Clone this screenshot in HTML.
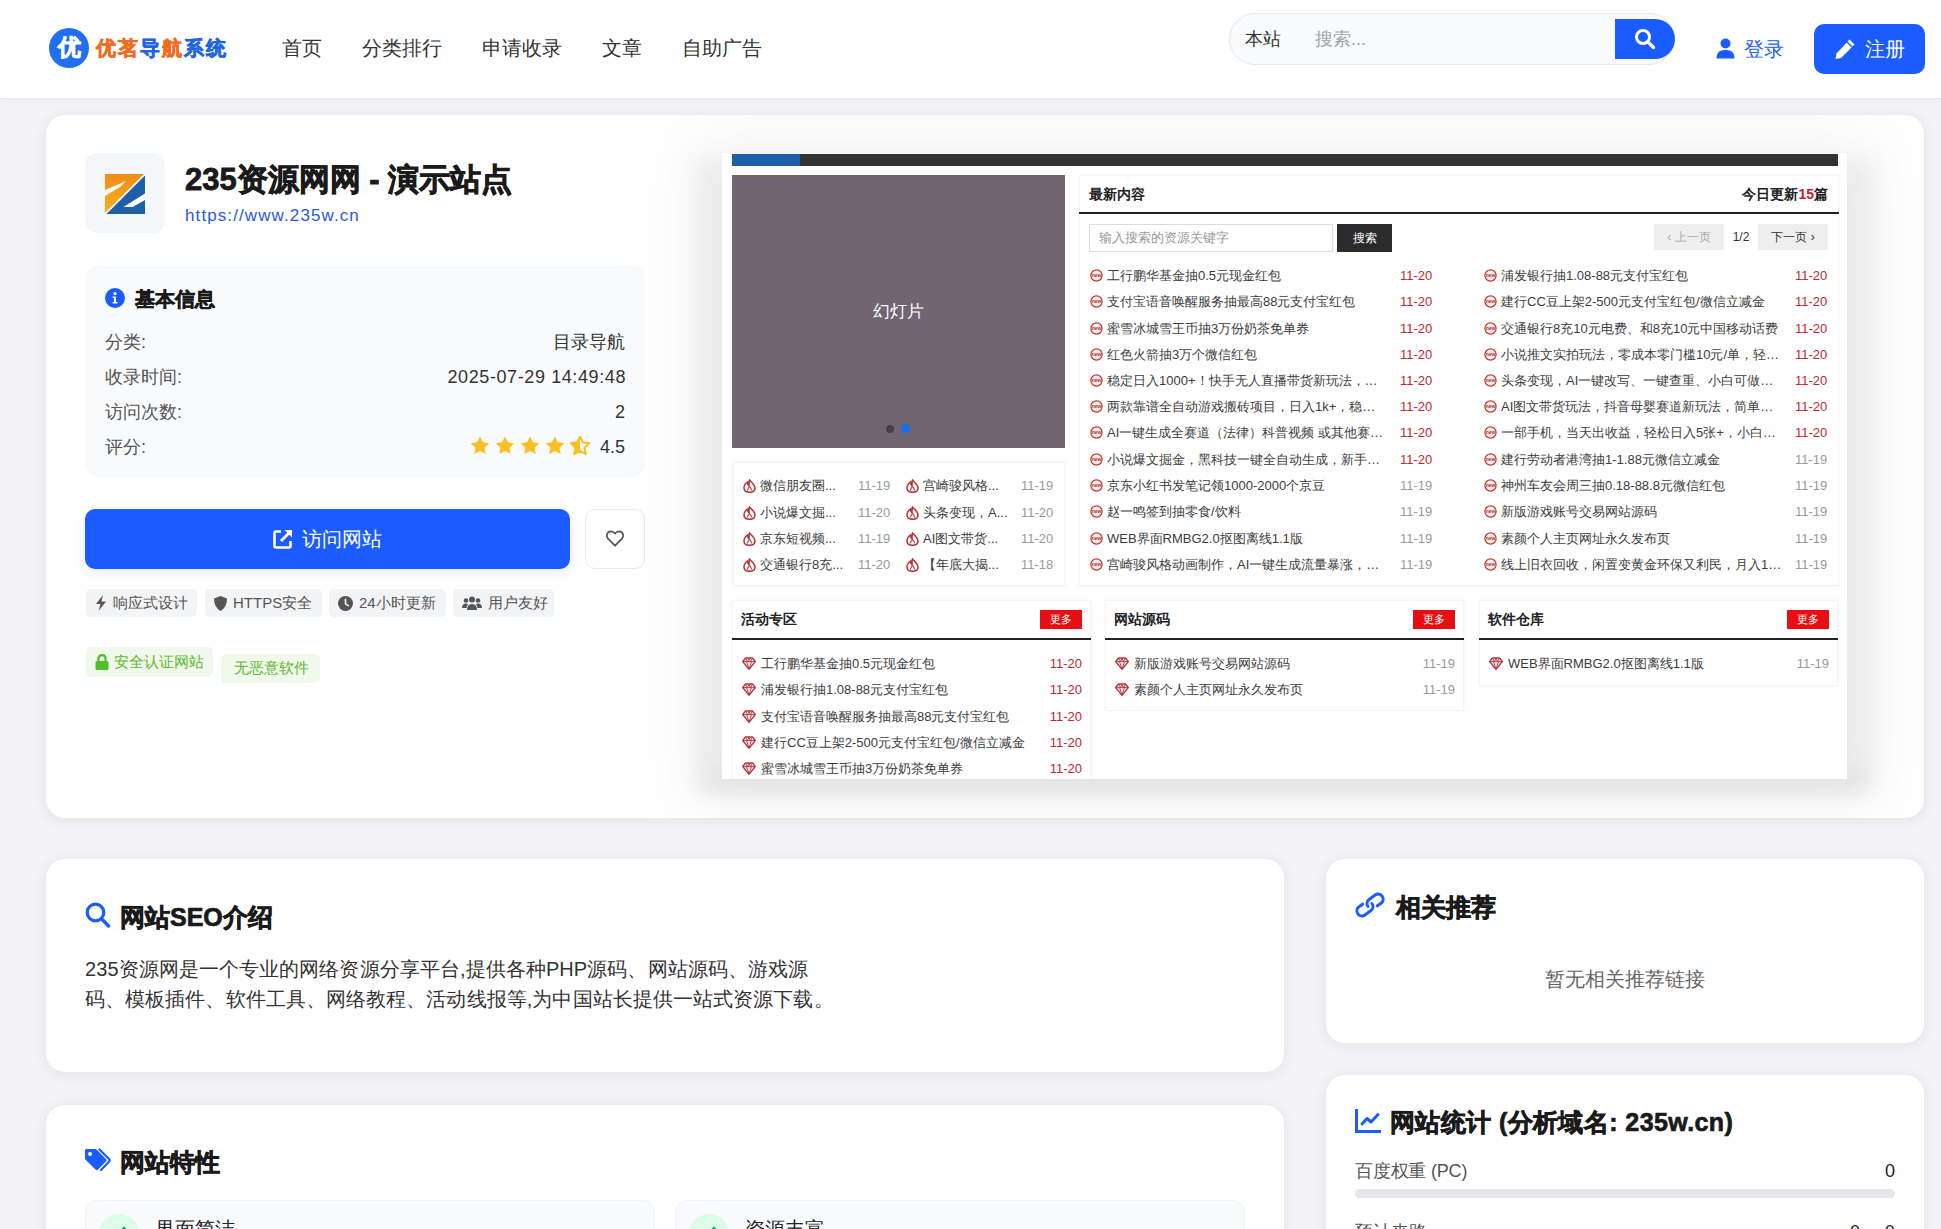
<!DOCTYPE html>
<html><head><meta charset="utf-8">
<style>
*{box-sizing:border-box;margin:0;padding:0}
html,body{width:1941px;height:1229px;overflow:hidden}
body{background:#f3f3f8;font-family:"Liberation Sans",sans-serif;color:#333;position:relative}
.abs{position:absolute}
.hdr{position:absolute;left:0;top:0;width:1941px;height:99px;background:#fff;border-bottom:1px solid #e9eaef;box-shadow:0 2px 6px rgba(0,0,0,.03)}
.logo-c{left:49px;top:28px;width:40px;height:40px;border-radius:50%;background:#1f6ff0;color:#fff;font-family:"Liberation Serif",serif;font-weight:900;font-size:23px;line-height:40px;text-align:center;-webkit-text-stroke:.8px #fff}
.logo-t{left:96px;top:33px;font-family:"Liberation Serif",serif;font-weight:900;font-size:20px;line-height:30px;letter-spacing:2px}
.nav{top:34px;font-size:20px;line-height:28px;color:#333}
.sbox{left:1229px;top:13px;width:446px;height:52px;border-radius:26px;background:#f9fafb;border:1px solid #e8e9ec}
.sbtn{left:1615px;top:19px;width:60px;height:40px;background:#1a5cff;border-radius:0 20px 20px 0}
.card{position:absolute;background:#fff;border-radius:20px;box-shadow:0 2px 14px rgba(30,30,80,.07);border:1px solid #ebecf2}
.blue{color:#1a5cff}
.lbl{left:105px;font-size:18px;line-height:26px;color:#555}
.val{right:1316px;font-size:18px;line-height:26px;color:#333;text-align:right;white-space:nowrap}
.tag{top:589px;height:28px;border-radius:5px;background:#f3f4f6;font-size:15px;color:#555;display:flex;align-items:center;padding-left:9px;white-space:nowrap}
.gtag{border-radius:5px;background:#f0f9eb;font-size:15px;color:#5cb82f;display:flex;align-items:center;white-space:nowrap}
.pbox{background:#fff;border:1px solid #f5f5f5;box-shadow:0 0 4px rgba(0,0,0,.035)}
.pl{height:26px;font-size:13px;line-height:26px;color:#3c3c3c;white-space:nowrap}
.el{position:absolute;top:0;overflow:hidden;text-overflow:ellipsis;white-space:nowrap}
.htitle{font-size:25px;line-height:36px;font-weight:bold;color:#1a1a1a;white-space:nowrap;-webkit-text-stroke:.7px #1a1a1a}
</style></head><body>
<div class="hdr"></div>
<div class="abs logo-c">优</div>
<div class="abs logo-t"><span style="color:#f26b1d;-webkit-text-stroke:.6px #f26b1d">优茗</span><span style="color:#1f66e0;-webkit-text-stroke:.6px #1f66e0">导</span><span style="color:#f26b1d;-webkit-text-stroke:.6px #f26b1d">航</span><span style="color:#1f66e0;-webkit-text-stroke:.6px #1f66e0">系统</span></div>
<div class="abs nav" style="left:282px">首页</div>
<div class="abs nav" style="left:362px">分类排行</div>
<div class="abs nav" style="left:482px">申请收录</div>
<div class="abs nav" style="left:602px">文章</div>
<div class="abs nav" style="left:682px">自助广告</div>
<div class="abs sbox"></div>
<div class="abs" style="left:1245px;top:26px;font-size:18px;line-height:26px;color:#333">本站</div>
<div class="abs" style="left:1315px;top:26px;font-size:18px;line-height:26px;color:#a0a3a8">搜索...</div>
<div class="abs sbtn"></div>
<svg class="abs" style="left:1634px;top:28px" width="22" height="22" viewBox="0 0 22 22"><circle cx="9" cy="9" r="6.5" fill="none" stroke="#fff" stroke-width="3"/><path d="M13.5 13.5 L19.5 19.5" stroke="#fff" stroke-width="3.2" stroke-linecap="round"/></svg>
<svg class="abs" style="left:1716px;top:38px" width="19" height="21" viewBox="0 0 19 21"><circle cx="9.5" cy="5.5" r="5" fill="#1a5cff"/><path d="M0.5 20.5 C0.5 14 4 12 9.5 12 C15 12 18.5 14 18.5 20.5 Z" fill="#1a5cff"/></svg>
<div class="abs blue" style="left:1744px;top:35px;font-size:20px;line-height:28px">登录</div>
<div class="abs" style="left:1814px;top:24px;width:111px;height:50px;background:#1a5cff;border-radius:10px"></div>
<svg class="abs" style="left:1834px;top:38px" width="22" height="22" viewBox="0 0 22 22"><path d="M15.5 1.5 L20.5 6.5 L7 20 L1.5 21 L2.5 15.5 Z" fill="#fff"/><path d="M13 4 L18 9" stroke="#1a5cff" stroke-width="1.4"/></svg>
<div class="abs" style="left:1865px;top:35px;font-size:20px;line-height:28px;color:#fff">注册</div>

<!-- main card -->
<div class="card" style="left:45px;top:114px;width:1880px;height:705px"></div>


<!-- site icon -->
<div class="abs" style="left:85px;top:153px;width:80px;height:80px;border-radius:12px;background:#f5f6f9"></div>
<svg class="abs" style="left:105px;top:174px" width="40" height="40" viewBox="0 0 40 40">
<defs><linearGradient id="og" x1="0" y1="0" x2="0" y2="1"><stop offset="0" stop-color="#f08c1a"/><stop offset="1" stop-color="#f7b21c"/></linearGradient></defs>
<polygon points="0,0 39,0 0,39" fill="url(#og)"/>
<polygon points="40,1.5 40,40 1.5,40" fill="#1f5fa8"/>
<polygon points="0,16 21,7 15,13 0,22" fill="#fff"/>
<polygon points="18.5,33 40,19.5 40,26 27.5,33" fill="#fff"/>
</svg>
<div class="abs" style="left:185px;top:160px;font-size:31px;line-height:40px;font-weight:bold;color:#1a1a1a;white-space:nowrap;-webkit-text-stroke:.8px #1a1a1a">235资源网网 - 演示站点</div>
<div class="abs" style="left:185px;top:205px;font-size:17px;line-height:22px;color:#2c5ad8;white-space:nowrap;letter-spacing:1.1px">https://www.235w.cn</div>

<!-- info box -->
<div class="abs" style="left:85px;top:265px;width:560px;height:212px;border-radius:14px;background:#f9fafb"></div>
<svg class="abs" style="left:105px;top:288px" width="20" height="20" viewBox="0 0 20 20"><circle cx="10" cy="10" r="10" fill="#1a5cff"/><circle cx="10" cy="5.6" r="1.6" fill="#fff"/><path d="M7.6 8.6 H11 V14 H12.4 V15.4 H7.6 V14 H9 V10 H7.6 Z" fill="#fff"/></svg>
<div class="abs" style="left:135px;top:285px;font-size:20px;line-height:28px;font-weight:bold;color:#1a1a1a;-webkit-text-stroke:.6px #1a1a1a">基本信息</div>
<div class="abs lbl" style="top:329px">分类:</div><div class="abs val" style="top:329px">目录导航</div>
<div class="abs lbl" style="top:364px">收录时间:</div><div class="abs val" style="top:364px;letter-spacing:.6px;right:1315px">2025-07-29 14:49:48</div>
<div class="abs lbl" style="top:399px">访问次数:</div><div class="abs val" style="top:399px">2</div>
<div class="abs lbl" style="top:434px">评分:</div><div class="abs val" style="top:434px">4.5</div>
<div class="abs" style="left:470px;top:436px;white-space:nowrap;line-height:0">
<svg width="20" height="20" viewBox="1 1 22 22" style="margin-right:5px"><path d="M12 1.5 L15.1 8 L22.2 8.9 L17 13.8 L18.3 20.8 L12 17.4 L5.7 20.8 L7 13.8 L1.8 8.9 L8.9 8 Z" fill="#fbbf24"/></svg><svg width="20" height="20" viewBox="1 1 22 22" style="margin-right:5px"><path d="M12 1.5 L15.1 8 L22.2 8.9 L17 13.8 L18.3 20.8 L12 17.4 L5.7 20.8 L7 13.8 L1.8 8.9 L8.9 8 Z" fill="#fbbf24"/></svg><svg width="20" height="20" viewBox="1 1 22 22" style="margin-right:5px"><path d="M12 1.5 L15.1 8 L22.2 8.9 L17 13.8 L18.3 20.8 L12 17.4 L5.7 20.8 L7 13.8 L1.8 8.9 L8.9 8 Z" fill="#fbbf24"/></svg><svg width="20" height="20" viewBox="1 1 22 22" style="margin-right:5px"><path d="M12 1.5 L15.1 8 L22.2 8.9 L17 13.8 L18.3 20.8 L12 17.4 L5.7 20.8 L7 13.8 L1.8 8.9 L8.9 8 Z" fill="#fbbf24"/></svg><svg width="20" height="20" viewBox="1 1 22 22"><path d="M12 1.5 L15.1 8 L22.2 8.9 L17 13.8 L18.3 20.8 L12 17.4 L5.7 20.8 L7 13.8 L1.8 8.9 L8.9 8 Z" fill="none" stroke="#fbbf24" stroke-width="2.2" stroke-linejoin="round"/><path d="M12 1.5 L12 17.4 L5.7 20.8 L7 13.8 L1.8 8.9 L8.9 8 Z" fill="#fbbf24"/></svg>
</div>

<!-- visit button -->
<div class="abs" style="left:85px;top:509px;width:485px;height:60px;border-radius:10px;background:#1a5cff;box-shadow:0 4px 12px rgba(26,92,255,.12)"></div>
<svg class="abs" style="left:272px;top:528px" width="22" height="22" viewBox="0 0 22 22"><path d="M9 3.5 H4 Q2.5 3.5 2.5 5 V18 Q2.5 19.5 4 19.5 H17 Q18.5 19.5 18.5 18 V13" fill="none" stroke="#fff" stroke-width="2.6"/><path d="M12.5 2 H20 V9.5 Z" fill="#fff"/><path d="M9 13 L17 5" stroke="#fff" stroke-width="2.8"/></svg>
<div class="abs" style="left:302px;top:525px;font-size:20px;line-height:28px;color:#fff">访问网站</div>
<div class="abs" style="left:585px;top:509px;width:60px;height:60px;border-radius:10px;background:#fff;border:1px solid #e8e9ec"></div>
<svg class="abs" style="left:605px;top:530px" width="20" height="17" viewBox="0 0 22 20"><path d="M11 18.5 L3 10.5 Q0.8 8.2 1.5 5.2 Q2.5 1.8 6 1.6 Q8.8 1.5 11 4.2 Q13.2 1.5 16 1.6 Q19.5 1.8 20.5 5.2 Q21.2 8.2 19 10.5 Z" fill="none" stroke="#555" stroke-width="2"/></svg>

<!-- tags -->
<div class="abs tag" style="left:86px;width:111px"><svg width="12" height="16" viewBox="0 0 12 16" style="margin-right:6px"><path d="M8 0 L1 9 H5.5 L3.5 16 L11 6.5 H6.5 Z" fill="#555"/></svg>响应式设计</div>
<div class="abs tag" style="left:205px;width:117px"><svg width="13" height="15" viewBox="0 0 13 15" style="margin-right:6px"><path d="M6.5 0 L13 2.4 Q13 11 6.5 15 Q0 11 0 2.4 Z" fill="#555"/></svg>HTTPS安全</div>
<div class="abs tag" style="left:329px;width:117px"><svg width="15" height="15" viewBox="0 0 15 15" style="margin-right:6px"><circle cx="7.5" cy="7.5" r="7.5" fill="#555"/><path d="M7.5 3.2 V7.8 L10.3 9.6" stroke="#fff" stroke-width="1.6" fill="none" stroke-linecap="round"/></svg>24小时更新</div>
<div class="abs tag" style="left:453px;width:101px"><svg width="20" height="15" viewBox="0 0 20 15" style="margin-right:6px"><circle cx="10" cy="3.5" r="3" fill="#555"/><circle cx="4" cy="4.5" r="2.3" fill="#555"/><circle cx="16" cy="4.5" r="2.3" fill="#555"/><path d="M5 14 Q5 8 10 8 Q15 8 15 14 Z" fill="#555"/><path d="M0 12 Q0 7.5 4 7.5 Q5.5 7.5 6 8.5 Q4.5 10 4.5 12 Z" fill="#555"/><path d="M20 12 Q20 7.5 16 7.5 Q14.5 7.5 14 8.5 Q15.5 10 15.5 12 Z" fill="#555"/></svg>用户友好</div>

<div class="abs gtag" style="left:86px;top:647px;width:127px;height:30px;padding-left:9px"><svg width="14" height="16" viewBox="0 0 14 16" style="margin-right:5px"><path d="M3.5 7 V4.5 Q3.5 1.2 7 1.2 Q10.5 1.2 10.5 4.5 V7" fill="none" stroke="#4cc02c" stroke-width="2.2"/><rect x="0.5" y="7" width="13" height="9" rx="1.5" fill="#4cc02c"/></svg>安全认证网站</div>
<div class="abs gtag" style="left:221px;top:654px;width:99px;height:29px;justify-content:center;padding-left:2px">无恶意软件</div>


<!-- SEO card -->
<div class="card" style="left:45px;top:858px;width:1240px;height:215px"></div>
<svg class="abs" style="left:85px;top:902px" width="26" height="27" viewBox="0 0 26 27"><circle cx="10.5" cy="10.5" r="8.3" fill="none" stroke="#1a5cff" stroke-width="3.2"/><path d="M16.5 16.8 L23.5 24" stroke="#1a5cff" stroke-width="3.4" stroke-linecap="round"/></svg>
<div class="abs htitle" style="left:120px;top:899px">网站SEO介绍</div>
<div class="abs" style="left:85px;top:954px;font-size:20px;line-height:30px;color:#333;white-space:nowrap;letter-spacing:.08px">235资源网是一个专业的网络资源分享平台,提供各种PHP源码、网站源码、游戏源<br>码、模板插件、软件工具、网络教程、活动线报等,为中国站长提供一站式资源下载。</div>

<!-- features card -->
<div class="card" style="left:45px;top:1104px;width:1240px;height:200px"></div>
<svg class="abs" style="left:84px;top:1148px" width="28" height="25" viewBox="0 0 28 25"><path d="M1 2.5 Q1 1 2.5 1 H11 Q12 1 12.8 1.8 L22 11 Q23.2 12.3 22 13.5 L14 21.5 Q12.7 22.8 11.5 21.5 L1.8 12 Q1 11.2 1 10 Z" fill="#1a5cff"/><circle cx="6" cy="6" r="2" fill="#fff"/><path d="M15.5 1.5 L25 11 Q26.5 12.3 25 13.7 L17 22" fill="none" stroke="#1a5cff" stroke-width="2.2" stroke-linecap="round"/></svg>
<div class="abs htitle" style="left:120px;top:1144px">网站特性</div>
<div class="abs" style="left:85px;top:1200px;width:570px;height:80px;border-radius:12px;background:#f9fafb;border:1px solid #f2f3f5"></div>
<div class="abs" style="left:675px;top:1200px;width:570px;height:80px;border-radius:12px;background:#f9fafb;border:1px solid #f2f3f5"></div>
<div class="abs" style="left:99px;top:1214px;width:40px;height:40px;border-radius:50%;background:#dcfce7"></div>
<div class="abs" style="left:689px;top:1214px;width:40px;height:40px;border-radius:50%;background:#dcfce7"></div>
<div class="abs" style="left:113px;top:1226px;width:12px;height:8px;border-left:3px solid #16a34a;border-bottom:3px solid #16a34a;transform:rotate(-45deg)"></div>
<div class="abs" style="left:703px;top:1226px;width:12px;height:8px;border-left:3px solid #16a34a;border-bottom:3px solid #16a34a;transform:rotate(-45deg)"></div>
<div class="abs" style="left:155px;top:1215px;font-size:20px;line-height:28px;color:#222">界面简洁</div>
<div class="abs" style="left:745px;top:1215px;font-size:20px;line-height:28px;color:#222">资源丰富</div>

<!-- related card -->
<div class="card" style="left:1325px;top:858px;width:600px;height:186px"></div>
<svg class="abs" style="left:1353px;top:890px" width="34" height="30" viewBox="0 0 34 30"><g transform="rotate(-36 17 15)" fill="none" stroke="#1a5cff" stroke-width="3" stroke-linecap="round"><path d="M19.5 15 A5 5 0 0 1 14.5 20 H7 A5 5 0 0 1 7 10 H11.5"/><path d="M14.5 15 A5 5 0 0 1 19.5 10 H27 A5 5 0 0 1 27 20 H22.5"/></g></svg>
<div class="abs htitle" style="left:1396px;top:889px">相关推荐</div>
<div class="abs" style="left:1325px;width:600px;top:965px;text-align:center;font-size:20px;line-height:28px;color:#666">暂无相关推荐链接</div>

<!-- stats card -->
<div class="card" style="left:1325px;top:1074px;width:600px;height:200px"></div>
<svg class="abs" style="left:1355px;top:1109px" width="26" height="24" viewBox="0 0 26 24"><path d="M1.5 1 V22.5 H25" fill="none" stroke="#1a5cff" stroke-width="3" stroke-linecap="round"/><path d="M7 15 L12 9.5 L16 13 L23 5.5" fill="none" stroke="#1a5cff" stroke-width="3" stroke-linecap="round" stroke-linejoin="round"/></svg>
<div class="abs htitle" style="left:1390px;top:1104px;letter-spacing:.4px">网站统计 (分析域名: 235w.cn)</div>
<div class="abs" style="left:1355px;top:1158px;font-size:18px;line-height:26px;color:#555;letter-spacing:-.2px">百度权重 (PC)</div>
<div class="abs" style="left:1795px;width:100px;text-align:right;top:1158px;font-size:18px;line-height:26px;color:#222">0</div>
<div class="abs" style="left:1355px;top:1189px;width:540px;height:9px;border-radius:5px;background:#e5e7eb"></div>
<div class="abs" style="left:1355px;top:1219px;font-size:18px;line-height:26px;color:#555">预计来路</div>
<div class="abs" style="left:1797px;width:100px;text-align:right;top:1219px;font-size:18px;line-height:26px;color:#222;letter-spacing:2.2px">0 - 0</div>

<!--PREVIEW-->
<div class="abs" style="left:45px;top:114px;width:1880px;height:705px;overflow:hidden;border-radius:20px">
<div class="abs" style="left:650px;top:44px;width:1180px;height:630px;background:#f2f2f2;filter:blur(12px)"></div>
<div class="abs" style="left:660px;top:652px;width:1160px;height:26px;background:#eaeaea;filter:blur(9px)"></div>
<div class="abs" style="left:677px;top:39px;width:1125px;height:626px;background:#fff;overflow:hidden;box-shadow:0 8px 80px 40px rgba(0,0,0,.035)">
<div style="position:absolute;left:-722px;top:-153px;width:1941px;height:1229px">
<div class="abs" style="left:732px;top:154px;width:1106px;height:12px;background:#333"></div>
<div class="abs" style="left:732px;top:154px;width:68px;height:12px;background:#1e5ea6"></div>
<div class="abs" style="left:732px;top:175px;width:333px;height:273px;background:#706571"></div>
<div class="abs" style="left:732px;top:300px;width:333px;text-align:center;font-size:17px;line-height:24px;color:#fff">幻灯片</div>
<div class="abs" style="left:886px;top:425px;width:8px;height:8px;border-radius:50%;background:#4a4049"></div>
<div class="abs" style="left:901px;top:424px;width:9px;height:9px;border-radius:50%;background:#1b6df0"></div>
<div class="abs pbox" style="left:733px;top:462px;width:332px;height:124px"></div>
<div class="abs pl" style="left:743px;top:473px;width:150px"><svg width="13" height="14" viewBox="0 0 13 14" style="position:absolute;left:0;top:6px"><path d="M6.5 1 C9 3.5 12 6 12 9 C12 12 9.5 13.3 6.5 13.3 C3.5 13.3 1 12 1 9 C1 6.5 3 4 4.5 3 C4.5 5 5 6 6 6.5 C6 4.5 6 2.5 6.5 1 Z" fill="none" stroke="#b8323a" stroke-width="1.5"/><path d="M4 11.5 L6.5 7 L9 11.5" fill="none" stroke="#c84a50" stroke-width="1.3"/></svg><span style="position:absolute;left:17px;top:0">微信朋友圈...</span><span style="position:absolute;left:115px;top:0;color:#999">11-19</span></div>
<div class="abs pl" style="left:906px;top:473px;width:150px"><svg width="13" height="14" viewBox="0 0 13 14" style="position:absolute;left:0;top:6px"><path d="M6.5 1 C9 3.5 12 6 12 9 C12 12 9.5 13.3 6.5 13.3 C3.5 13.3 1 12 1 9 C1 6.5 3 4 4.5 3 C4.5 5 5 6 6 6.5 C6 4.5 6 2.5 6.5 1 Z" fill="none" stroke="#b8323a" stroke-width="1.5"/><path d="M4 11.5 L6.5 7 L9 11.5" fill="none" stroke="#c84a50" stroke-width="1.3"/></svg><span style="position:absolute;left:17px;top:0">宫崎骏风格...</span><span style="position:absolute;left:115px;top:0;color:#999">11-19</span></div>
<div class="abs pl" style="left:743px;top:500px;width:150px"><svg width="13" height="14" viewBox="0 0 13 14" style="position:absolute;left:0;top:6px"><path d="M6.5 1 C9 3.5 12 6 12 9 C12 12 9.5 13.3 6.5 13.3 C3.5 13.3 1 12 1 9 C1 6.5 3 4 4.5 3 C4.5 5 5 6 6 6.5 C6 4.5 6 2.5 6.5 1 Z" fill="none" stroke="#b8323a" stroke-width="1.5"/><path d="M4 11.5 L6.5 7 L9 11.5" fill="none" stroke="#c84a50" stroke-width="1.3"/></svg><span style="position:absolute;left:17px;top:0">小说爆文掘...</span><span style="position:absolute;left:115px;top:0;color:#999">11-20</span></div>
<div class="abs pl" style="left:906px;top:500px;width:150px"><svg width="13" height="14" viewBox="0 0 13 14" style="position:absolute;left:0;top:6px"><path d="M6.5 1 C9 3.5 12 6 12 9 C12 12 9.5 13.3 6.5 13.3 C3.5 13.3 1 12 1 9 C1 6.5 3 4 4.5 3 C4.5 5 5 6 6 6.5 C6 4.5 6 2.5 6.5 1 Z" fill="none" stroke="#b8323a" stroke-width="1.5"/><path d="M4 11.5 L6.5 7 L9 11.5" fill="none" stroke="#c84a50" stroke-width="1.3"/></svg><span style="position:absolute;left:17px;top:0">头条变现，A...</span><span style="position:absolute;left:115px;top:0;color:#999">11-20</span></div>
<div class="abs pl" style="left:743px;top:526px;width:150px"><svg width="13" height="14" viewBox="0 0 13 14" style="position:absolute;left:0;top:6px"><path d="M6.5 1 C9 3.5 12 6 12 9 C12 12 9.5 13.3 6.5 13.3 C3.5 13.3 1 12 1 9 C1 6.5 3 4 4.5 3 C4.5 5 5 6 6 6.5 C6 4.5 6 2.5 6.5 1 Z" fill="none" stroke="#b8323a" stroke-width="1.5"/><path d="M4 11.5 L6.5 7 L9 11.5" fill="none" stroke="#c84a50" stroke-width="1.3"/></svg><span style="position:absolute;left:17px;top:0">京东短视频...</span><span style="position:absolute;left:115px;top:0;color:#999">11-19</span></div>
<div class="abs pl" style="left:906px;top:526px;width:150px"><svg width="13" height="14" viewBox="0 0 13 14" style="position:absolute;left:0;top:6px"><path d="M6.5 1 C9 3.5 12 6 12 9 C12 12 9.5 13.3 6.5 13.3 C3.5 13.3 1 12 1 9 C1 6.5 3 4 4.5 3 C4.5 5 5 6 6 6.5 C6 4.5 6 2.5 6.5 1 Z" fill="none" stroke="#b8323a" stroke-width="1.5"/><path d="M4 11.5 L6.5 7 L9 11.5" fill="none" stroke="#c84a50" stroke-width="1.3"/></svg><span style="position:absolute;left:17px;top:0">AI图文带货...</span><span style="position:absolute;left:115px;top:0;color:#999">11-20</span></div>
<div class="abs pl" style="left:743px;top:552px;width:150px"><svg width="13" height="14" viewBox="0 0 13 14" style="position:absolute;left:0;top:6px"><path d="M6.5 1 C9 3.5 12 6 12 9 C12 12 9.5 13.3 6.5 13.3 C3.5 13.3 1 12 1 9 C1 6.5 3 4 4.5 3 C4.5 5 5 6 6 6.5 C6 4.5 6 2.5 6.5 1 Z" fill="none" stroke="#b8323a" stroke-width="1.5"/><path d="M4 11.5 L6.5 7 L9 11.5" fill="none" stroke="#c84a50" stroke-width="1.3"/></svg><span style="position:absolute;left:17px;top:0">交通银行8充...</span><span style="position:absolute;left:115px;top:0;color:#999">11-20</span></div>
<div class="abs pl" style="left:906px;top:552px;width:150px"><svg width="13" height="14" viewBox="0 0 13 14" style="position:absolute;left:0;top:6px"><path d="M6.5 1 C9 3.5 12 6 12 9 C12 12 9.5 13.3 6.5 13.3 C3.5 13.3 1 12 1 9 C1 6.5 3 4 4.5 3 C4.5 5 5 6 6 6.5 C6 4.5 6 2.5 6.5 1 Z" fill="none" stroke="#b8323a" stroke-width="1.5"/><path d="M4 11.5 L6.5 7 L9 11.5" fill="none" stroke="#c84a50" stroke-width="1.3"/></svg><span style="position:absolute;left:17px;top:0">【年底大揭...</span><span style="position:absolute;left:115px;top:0;color:#999">11-18</span></div>
<div class="abs pbox" style="left:1079px;top:175px;width:760px;height:411px"></div>
<div class="abs" style="left:1089px;top:184px;font-size:14px;line-height:20px;font-weight:bold;color:#222">最新内容</div>
<div class="abs" style="left:1700px;width:128px;text-align:right;top:184px;font-size:14px;line-height:20px;font-weight:bold;color:#222">今日更新<span style="color:#c8202a">15</span>篇</div>
<div class="abs" style="left:1079px;top:212px;width:760px;height:2px;background:#222"></div>
<div class="abs" style="left:1089px;top:224px;width:244px;height:28px;border:1px solid #ddd;background:#fff;font-size:13px;line-height:26px;padding-left:9px;color:#999">输入搜索的资源关键字</div>
<div class="abs" style="left:1337px;top:224px;width:55px;height:28px;background:#2b2b2b;color:#fff;font-size:12px;line-height:28px;text-align:center">搜索</div>
<div class="abs" style="left:1654px;top:224px;width:70px;height:26px;background:#eee;color:#aaa;font-size:12px;line-height:26px;text-align:center">‹ 上一页</div>
<div class="abs" style="left:1731px;top:224px;width:20px;color:#333;font-size:12px;line-height:26px;text-align:center">1/2</div>
<div class="abs" style="left:1758px;top:224px;width:70px;height:26px;background:#eee;color:#333;font-size:12px;line-height:26px;text-align:center">下一页 ›</div>
<div class="abs pl" style="left:1090px;top:263px;width:344px"><svg width="13" height="13" viewBox="0 0 13 13" style="position:absolute;left:0;top:6px"><circle cx="6.5" cy="6.5" r="5.6" fill="#fdeeee" stroke="#c0392b" stroke-width="1.2"/><text x="6.5" y="8.3" font-size="5" text-anchor="middle" fill="#b03030" font-family="Liberation Sans" font-weight="bold">new</text></svg><span class="el" style="left:17px;width:281px">工行鹏华基金抽0.5元现金红包</span><span style="position:absolute;left:310px;top:0;color:#bb2a30">11-20</span></div>
<div class="abs pl" style="left:1090px;top:289px;width:344px"><svg width="13" height="13" viewBox="0 0 13 13" style="position:absolute;left:0;top:6px"><circle cx="6.5" cy="6.5" r="5.6" fill="#fdeeee" stroke="#c0392b" stroke-width="1.2"/><text x="6.5" y="8.3" font-size="5" text-anchor="middle" fill="#b03030" font-family="Liberation Sans" font-weight="bold">new</text></svg><span class="el" style="left:17px;width:281px">支付宝语音唤醒服务抽最高88元支付宝红包</span><span style="position:absolute;left:310px;top:0;color:#bb2a30">11-20</span></div>
<div class="abs pl" style="left:1090px;top:316px;width:344px"><svg width="13" height="13" viewBox="0 0 13 13" style="position:absolute;left:0;top:6px"><circle cx="6.5" cy="6.5" r="5.6" fill="#fdeeee" stroke="#c0392b" stroke-width="1.2"/><text x="6.5" y="8.3" font-size="5" text-anchor="middle" fill="#b03030" font-family="Liberation Sans" font-weight="bold">new</text></svg><span class="el" style="left:17px;width:281px">蜜雪冰城雪王币抽3万份奶茶免单券</span><span style="position:absolute;left:310px;top:0;color:#bb2a30">11-20</span></div>
<div class="abs pl" style="left:1090px;top:342px;width:344px"><svg width="13" height="13" viewBox="0 0 13 13" style="position:absolute;left:0;top:6px"><circle cx="6.5" cy="6.5" r="5.6" fill="#fdeeee" stroke="#c0392b" stroke-width="1.2"/><text x="6.5" y="8.3" font-size="5" text-anchor="middle" fill="#b03030" font-family="Liberation Sans" font-weight="bold">new</text></svg><span class="el" style="left:17px;width:281px">红色火箭抽3万个微信红包</span><span style="position:absolute;left:310px;top:0;color:#bb2a30">11-20</span></div>
<div class="abs pl" style="left:1090px;top:368px;width:344px"><svg width="13" height="13" viewBox="0 0 13 13" style="position:absolute;left:0;top:6px"><circle cx="6.5" cy="6.5" r="5.6" fill="#fdeeee" stroke="#c0392b" stroke-width="1.2"/><text x="6.5" y="8.3" font-size="5" text-anchor="middle" fill="#b03030" font-family="Liberation Sans" font-weight="bold">new</text></svg><span class="el" style="left:17px;width:281px">稳定日入1000+！快手无人直播带货新玩法，日入过千</span><span style="position:absolute;left:310px;top:0;color:#bb2a30">11-20</span></div>
<div class="abs pl" style="left:1090px;top:394px;width:344px"><svg width="13" height="13" viewBox="0 0 13 13" style="position:absolute;left:0;top:6px"><circle cx="6.5" cy="6.5" r="5.6" fill="#fdeeee" stroke="#c0392b" stroke-width="1.2"/><text x="6.5" y="8.3" font-size="5" text-anchor="middle" fill="#b03030" font-family="Liberation Sans" font-weight="bold">new</text></svg><span class="el" style="left:17px;width:281px">两款靠谱全自动游戏搬砖项目，日入1k+，稳定收益</span><span style="position:absolute;left:310px;top:0;color:#bb2a30">11-20</span></div>
<div class="abs pl" style="left:1090px;top:420px;width:344px"><svg width="13" height="13" viewBox="0 0 13 13" style="position:absolute;left:0;top:6px"><circle cx="6.5" cy="6.5" r="5.6" fill="#fdeeee" stroke="#c0392b" stroke-width="1.2"/><text x="6.5" y="8.3" font-size="5" text-anchor="middle" fill="#b03030" font-family="Liberation Sans" font-weight="bold">new</text></svg><span class="el" style="left:17px;width:281px">AI一键生成全赛道（法律）科普视频 或其他赛道视频</span><span style="position:absolute;left:310px;top:0;color:#bb2a30">11-20</span></div>
<div class="abs pl" style="left:1090px;top:447px;width:344px"><svg width="13" height="13" viewBox="0 0 13 13" style="position:absolute;left:0;top:6px"><circle cx="6.5" cy="6.5" r="5.6" fill="#fdeeee" stroke="#c0392b" stroke-width="1.2"/><text x="6.5" y="8.3" font-size="5" text-anchor="middle" fill="#b03030" font-family="Liberation Sans" font-weight="bold">new</text></svg><span class="el" style="left:17px;width:281px">小说爆文掘金，黑科技一键全自动生成，新手也能做</span><span style="position:absolute;left:310px;top:0;color:#bb2a30">11-20</span></div>
<div class="abs pl" style="left:1090px;top:473px;width:344px"><svg width="13" height="13" viewBox="0 0 13 13" style="position:absolute;left:0;top:6px"><circle cx="6.5" cy="6.5" r="5.6" fill="#fdeeee" stroke="#c0392b" stroke-width="1.2"/><text x="6.5" y="8.3" font-size="5" text-anchor="middle" fill="#b03030" font-family="Liberation Sans" font-weight="bold">new</text></svg><span class="el" style="left:17px;width:281px">京东小红书发笔记领1000-2000个京豆</span><span style="position:absolute;left:310px;top:0;color:#999">11-19</span></div>
<div class="abs pl" style="left:1090px;top:499px;width:344px"><svg width="13" height="13" viewBox="0 0 13 13" style="position:absolute;left:0;top:6px"><circle cx="6.5" cy="6.5" r="5.6" fill="#fdeeee" stroke="#c0392b" stroke-width="1.2"/><text x="6.5" y="8.3" font-size="5" text-anchor="middle" fill="#b03030" font-family="Liberation Sans" font-weight="bold">new</text></svg><span class="el" style="left:17px;width:281px">赵一鸣签到抽零食/饮料</span><span style="position:absolute;left:310px;top:0;color:#999">11-19</span></div>
<div class="abs pl" style="left:1090px;top:526px;width:344px"><svg width="13" height="13" viewBox="0 0 13 13" style="position:absolute;left:0;top:6px"><circle cx="6.5" cy="6.5" r="5.6" fill="#fdeeee" stroke="#c0392b" stroke-width="1.2"/><text x="6.5" y="8.3" font-size="5" text-anchor="middle" fill="#b03030" font-family="Liberation Sans" font-weight="bold">new</text></svg><span class="el" style="left:17px;width:281px">WEB界面RMBG2.0抠图离线1.1版</span><span style="position:absolute;left:310px;top:0;color:#999">11-19</span></div>
<div class="abs pl" style="left:1090px;top:552px;width:344px"><svg width="13" height="13" viewBox="0 0 13 13" style="position:absolute;left:0;top:6px"><circle cx="6.5" cy="6.5" r="5.6" fill="#fdeeee" stroke="#c0392b" stroke-width="1.2"/><text x="6.5" y="8.3" font-size="5" text-anchor="middle" fill="#b03030" font-family="Liberation Sans" font-weight="bold">new</text></svg><span class="el" style="left:17px;width:281px">宫崎骏风格动画制作，AI一键生成流量暴涨，变现</span><span style="position:absolute;left:310px;top:0;color:#999">11-19</span></div>
<div class="abs pl" style="left:1484px;top:263px;width:345px"><svg width="13" height="13" viewBox="0 0 13 13" style="position:absolute;left:0;top:6px"><circle cx="6.5" cy="6.5" r="5.6" fill="#fdeeee" stroke="#c0392b" stroke-width="1.2"/><text x="6.5" y="8.3" font-size="5" text-anchor="middle" fill="#b03030" font-family="Liberation Sans" font-weight="bold">new</text></svg><span class="el" style="left:17px;width:282px">浦发银行抽1.08-88元支付宝红包</span><span style="position:absolute;left:311px;top:0;color:#bb2a30">11-20</span></div>
<div class="abs pl" style="left:1484px;top:289px;width:345px"><svg width="13" height="13" viewBox="0 0 13 13" style="position:absolute;left:0;top:6px"><circle cx="6.5" cy="6.5" r="5.6" fill="#fdeeee" stroke="#c0392b" stroke-width="1.2"/><text x="6.5" y="8.3" font-size="5" text-anchor="middle" fill="#b03030" font-family="Liberation Sans" font-weight="bold">new</text></svg><span class="el" style="left:17px;width:282px">建行CC豆上架2-500元支付宝红包/微信立减金</span><span style="position:absolute;left:311px;top:0;color:#bb2a30">11-20</span></div>
<div class="abs pl" style="left:1484px;top:316px;width:345px"><svg width="13" height="13" viewBox="0 0 13 13" style="position:absolute;left:0;top:6px"><circle cx="6.5" cy="6.5" r="5.6" fill="#fdeeee" stroke="#c0392b" stroke-width="1.2"/><text x="6.5" y="8.3" font-size="5" text-anchor="middle" fill="#b03030" font-family="Liberation Sans" font-weight="bold">new</text></svg><span class="el" style="left:17px;width:282px">交通银行8充10元电费、和8充10元中国移动话费</span><span style="position:absolute;left:311px;top:0;color:#bb2a30">11-20</span></div>
<div class="abs pl" style="left:1484px;top:342px;width:345px"><svg width="13" height="13" viewBox="0 0 13 13" style="position:absolute;left:0;top:6px"><circle cx="6.5" cy="6.5" r="5.6" fill="#fdeeee" stroke="#c0392b" stroke-width="1.2"/><text x="6.5" y="8.3" font-size="5" text-anchor="middle" fill="#b03030" font-family="Liberation Sans" font-weight="bold">new</text></svg><span class="el" style="left:17px;width:282px">小说推文实拍玩法，零成本零门槛10元/单，轻松上手</span><span style="position:absolute;left:311px;top:0;color:#bb2a30">11-20</span></div>
<div class="abs pl" style="left:1484px;top:368px;width:345px"><svg width="13" height="13" viewBox="0 0 13 13" style="position:absolute;left:0;top:6px"><circle cx="6.5" cy="6.5" r="5.6" fill="#fdeeee" stroke="#c0392b" stroke-width="1.2"/><text x="6.5" y="8.3" font-size="5" text-anchor="middle" fill="#b03030" font-family="Liberation Sans" font-weight="bold">new</text></svg><span class="el" style="left:17px;width:282px">头条变现，AI一键改写、一键查重、小白可做，日</span><span style="position:absolute;left:311px;top:0;color:#bb2a30">11-20</span></div>
<div class="abs pl" style="left:1484px;top:394px;width:345px"><svg width="13" height="13" viewBox="0 0 13 13" style="position:absolute;left:0;top:6px"><circle cx="6.5" cy="6.5" r="5.6" fill="#fdeeee" stroke="#c0392b" stroke-width="1.2"/><text x="6.5" y="8.3" font-size="5" text-anchor="middle" fill="#b03030" font-family="Liberation Sans" font-weight="bold">new</text></svg><span class="el" style="left:17px;width:282px">AI图文带货玩法，抖音母婴赛道新玩法，简单易上手</span><span style="position:absolute;left:311px;top:0;color:#bb2a30">11-20</span></div>
<div class="abs pl" style="left:1484px;top:420px;width:345px"><svg width="13" height="13" viewBox="0 0 13 13" style="position:absolute;left:0;top:6px"><circle cx="6.5" cy="6.5" r="5.6" fill="#fdeeee" stroke="#c0392b" stroke-width="1.2"/><text x="6.5" y="8.3" font-size="5" text-anchor="middle" fill="#b03030" font-family="Liberation Sans" font-weight="bold">new</text></svg><span class="el" style="left:17px;width:282px">一部手机，当天出收益，轻松日入5张+，小白也能做</span><span style="position:absolute;left:311px;top:0;color:#bb2a30">11-20</span></div>
<div class="abs pl" style="left:1484px;top:447px;width:345px"><svg width="13" height="13" viewBox="0 0 13 13" style="position:absolute;left:0;top:6px"><circle cx="6.5" cy="6.5" r="5.6" fill="#fdeeee" stroke="#c0392b" stroke-width="1.2"/><text x="6.5" y="8.3" font-size="5" text-anchor="middle" fill="#b03030" font-family="Liberation Sans" font-weight="bold">new</text></svg><span class="el" style="left:17px;width:282px">建行劳动者港湾抽1-1.88元微信立减金</span><span style="position:absolute;left:311px;top:0;color:#999">11-19</span></div>
<div class="abs pl" style="left:1484px;top:473px;width:345px"><svg width="13" height="13" viewBox="0 0 13 13" style="position:absolute;left:0;top:6px"><circle cx="6.5" cy="6.5" r="5.6" fill="#fdeeee" stroke="#c0392b" stroke-width="1.2"/><text x="6.5" y="8.3" font-size="5" text-anchor="middle" fill="#b03030" font-family="Liberation Sans" font-weight="bold">new</text></svg><span class="el" style="left:17px;width:282px">神州车友会周三抽0.18-88.8元微信红包</span><span style="position:absolute;left:311px;top:0;color:#999">11-19</span></div>
<div class="abs pl" style="left:1484px;top:499px;width:345px"><svg width="13" height="13" viewBox="0 0 13 13" style="position:absolute;left:0;top:6px"><circle cx="6.5" cy="6.5" r="5.6" fill="#fdeeee" stroke="#c0392b" stroke-width="1.2"/><text x="6.5" y="8.3" font-size="5" text-anchor="middle" fill="#b03030" font-family="Liberation Sans" font-weight="bold">new</text></svg><span class="el" style="left:17px;width:282px">新版游戏账号交易网站源码</span><span style="position:absolute;left:311px;top:0;color:#999">11-19</span></div>
<div class="abs pl" style="left:1484px;top:526px;width:345px"><svg width="13" height="13" viewBox="0 0 13 13" style="position:absolute;left:0;top:6px"><circle cx="6.5" cy="6.5" r="5.6" fill="#fdeeee" stroke="#c0392b" stroke-width="1.2"/><text x="6.5" y="8.3" font-size="5" text-anchor="middle" fill="#b03030" font-family="Liberation Sans" font-weight="bold">new</text></svg><span class="el" style="left:17px;width:282px">素颜个人主页网址永久发布页</span><span style="position:absolute;left:311px;top:0;color:#999">11-19</span></div>
<div class="abs pl" style="left:1484px;top:552px;width:345px"><svg width="13" height="13" viewBox="0 0 13 13" style="position:absolute;left:0;top:6px"><circle cx="6.5" cy="6.5" r="5.6" fill="#fdeeee" stroke="#c0392b" stroke-width="1.2"/><text x="6.5" y="8.3" font-size="5" text-anchor="middle" fill="#b03030" font-family="Liberation Sans" font-weight="bold">new</text></svg><span class="el" style="left:17px;width:282px">线上旧衣回收，闲置变黄金环保又利民，月入1万+</span><span style="position:absolute;left:311px;top:0;color:#999">11-19</span></div>
<div class="abs pbox" style="left:732px;top:600px;width:359px;height:200px"></div>
<div class="abs" style="left:741px;top:609px;font-size:14px;line-height:20px;font-weight:bold;color:#222">活动专区</div>
<div class="abs" style="left:1040px;top:610px;width:42px;height:19px;background:#e50f14;color:#fff;font-size:11px;line-height:19px;text-align:center">更多</div>
<div class="abs" style="left:732px;top:638px;width:359px;height:2px;background:#222"></div>
<div class="abs pl" style="left:742px;top:651px;width:340px"><svg width="14" height="13" viewBox="0 0 14 13" style="position:absolute;left:0;top:6px"><path d="M3.5 1 H10.5 L13.3 4.5 L7 12.3 L0.7 4.5 Z" fill="#fff2f2" stroke="#b8323a" stroke-width="1.3" stroke-linejoin="round"/><path d="M0.9 4.6 H13.1 M4.5 4.6 L7 12 L9.5 4.6 M3.6 1.2 L5.5 4.6 L7 1.5 L8.5 4.6 L10.4 1.2" fill="none" stroke="#b8323a" stroke-width=".9"/></svg><span style="position:absolute;left:19px;top:0">工行鹏华基金抽0.5元现金红包</span><span style="position:absolute;right:0;top:0;color:#bb2a30">11-20</span></div>
<div class="abs pl" style="left:742px;top:677px;width:340px"><svg width="14" height="13" viewBox="0 0 14 13" style="position:absolute;left:0;top:6px"><path d="M3.5 1 H10.5 L13.3 4.5 L7 12.3 L0.7 4.5 Z" fill="#fff2f2" stroke="#b8323a" stroke-width="1.3" stroke-linejoin="round"/><path d="M0.9 4.6 H13.1 M4.5 4.6 L7 12 L9.5 4.6 M3.6 1.2 L5.5 4.6 L7 1.5 L8.5 4.6 L10.4 1.2" fill="none" stroke="#b8323a" stroke-width=".9"/></svg><span style="position:absolute;left:19px;top:0">浦发银行抽1.08-88元支付宝红包</span><span style="position:absolute;right:0;top:0;color:#bb2a30">11-20</span></div>
<div class="abs pl" style="left:742px;top:704px;width:340px"><svg width="14" height="13" viewBox="0 0 14 13" style="position:absolute;left:0;top:6px"><path d="M3.5 1 H10.5 L13.3 4.5 L7 12.3 L0.7 4.5 Z" fill="#fff2f2" stroke="#b8323a" stroke-width="1.3" stroke-linejoin="round"/><path d="M0.9 4.6 H13.1 M4.5 4.6 L7 12 L9.5 4.6 M3.6 1.2 L5.5 4.6 L7 1.5 L8.5 4.6 L10.4 1.2" fill="none" stroke="#b8323a" stroke-width=".9"/></svg><span style="position:absolute;left:19px;top:0">支付宝语音唤醒服务抽最高88元支付宝红包</span><span style="position:absolute;right:0;top:0;color:#bb2a30">11-20</span></div>
<div class="abs pl" style="left:742px;top:730px;width:340px"><svg width="14" height="13" viewBox="0 0 14 13" style="position:absolute;left:0;top:6px"><path d="M3.5 1 H10.5 L13.3 4.5 L7 12.3 L0.7 4.5 Z" fill="#fff2f2" stroke="#b8323a" stroke-width="1.3" stroke-linejoin="round"/><path d="M0.9 4.6 H13.1 M4.5 4.6 L7 12 L9.5 4.6 M3.6 1.2 L5.5 4.6 L7 1.5 L8.5 4.6 L10.4 1.2" fill="none" stroke="#b8323a" stroke-width=".9"/></svg><span style="position:absolute;left:19px;top:0">建行CC豆上架2-500元支付宝红包/微信立减金</span><span style="position:absolute;right:0;top:0;color:#bb2a30">11-20</span></div>
<div class="abs pl" style="left:742px;top:756px;width:340px"><svg width="14" height="13" viewBox="0 0 14 13" style="position:absolute;left:0;top:6px"><path d="M3.5 1 H10.5 L13.3 4.5 L7 12.3 L0.7 4.5 Z" fill="#fff2f2" stroke="#b8323a" stroke-width="1.3" stroke-linejoin="round"/><path d="M0.9 4.6 H13.1 M4.5 4.6 L7 12 L9.5 4.6 M3.6 1.2 L5.5 4.6 L7 1.5 L8.5 4.6 L10.4 1.2" fill="none" stroke="#b8323a" stroke-width=".9"/></svg><span style="position:absolute;left:19px;top:0">蜜雪冰城雪王币抽3万份奶茶免单券</span><span style="position:absolute;right:0;top:0;color:#bb2a30">11-20</span></div>
<div class="abs pbox" style="left:1105px;top:600px;width:359px;height:111px"></div>
<div class="abs" style="left:1114px;top:609px;font-size:14px;line-height:20px;font-weight:bold;color:#222">网站源码</div>
<div class="abs" style="left:1413px;top:610px;width:42px;height:19px;background:#e50f14;color:#fff;font-size:11px;line-height:19px;text-align:center">更多</div>
<div class="abs" style="left:1105px;top:638px;width:359px;height:2px;background:#222"></div>
<div class="abs pl" style="left:1115px;top:651px;width:340px"><svg width="14" height="13" viewBox="0 0 14 13" style="position:absolute;left:0;top:6px"><path d="M3.5 1 H10.5 L13.3 4.5 L7 12.3 L0.7 4.5 Z" fill="#fff2f2" stroke="#b8323a" stroke-width="1.3" stroke-linejoin="round"/><path d="M0.9 4.6 H13.1 M4.5 4.6 L7 12 L9.5 4.6 M3.6 1.2 L5.5 4.6 L7 1.5 L8.5 4.6 L10.4 1.2" fill="none" stroke="#b8323a" stroke-width=".9"/></svg><span style="position:absolute;left:19px;top:0">新版游戏账号交易网站源码</span><span style="position:absolute;right:0;top:0;color:#999">11-19</span></div>
<div class="abs pl" style="left:1115px;top:677px;width:340px"><svg width="14" height="13" viewBox="0 0 14 13" style="position:absolute;left:0;top:6px"><path d="M3.5 1 H10.5 L13.3 4.5 L7 12.3 L0.7 4.5 Z" fill="#fff2f2" stroke="#b8323a" stroke-width="1.3" stroke-linejoin="round"/><path d="M0.9 4.6 H13.1 M4.5 4.6 L7 12 L9.5 4.6 M3.6 1.2 L5.5 4.6 L7 1.5 L8.5 4.6 L10.4 1.2" fill="none" stroke="#b8323a" stroke-width=".9"/></svg><span style="position:absolute;left:19px;top:0">素颜个人主页网址永久发布页</span><span style="position:absolute;right:0;top:0;color:#999">11-19</span></div>
<div class="abs pbox" style="left:1479px;top:600px;width:359px;height:86px"></div>
<div class="abs" style="left:1488px;top:609px;font-size:14px;line-height:20px;font-weight:bold;color:#222">软件仓库</div>
<div class="abs" style="left:1787px;top:610px;width:42px;height:19px;background:#e50f14;color:#fff;font-size:11px;line-height:19px;text-align:center">更多</div>
<div class="abs" style="left:1479px;top:638px;width:359px;height:2px;background:#222"></div>
<div class="abs pl" style="left:1489px;top:651px;width:340px"><svg width="14" height="13" viewBox="0 0 14 13" style="position:absolute;left:0;top:6px"><path d="M3.5 1 H10.5 L13.3 4.5 L7 12.3 L0.7 4.5 Z" fill="#fff2f2" stroke="#b8323a" stroke-width="1.3" stroke-linejoin="round"/><path d="M0.9 4.6 H13.1 M4.5 4.6 L7 12 L9.5 4.6 M3.6 1.2 L5.5 4.6 L7 1.5 L8.5 4.6 L10.4 1.2" fill="none" stroke="#b8323a" stroke-width=".9"/></svg><span style="position:absolute;left:19px;top:0">WEB界面RMBG2.0抠图离线1.1版</span><span style="position:absolute;right:0;top:0;color:#999">11-19</span></div>
</div></div></div>
<!--/PREVIEW-->
</body></html>
